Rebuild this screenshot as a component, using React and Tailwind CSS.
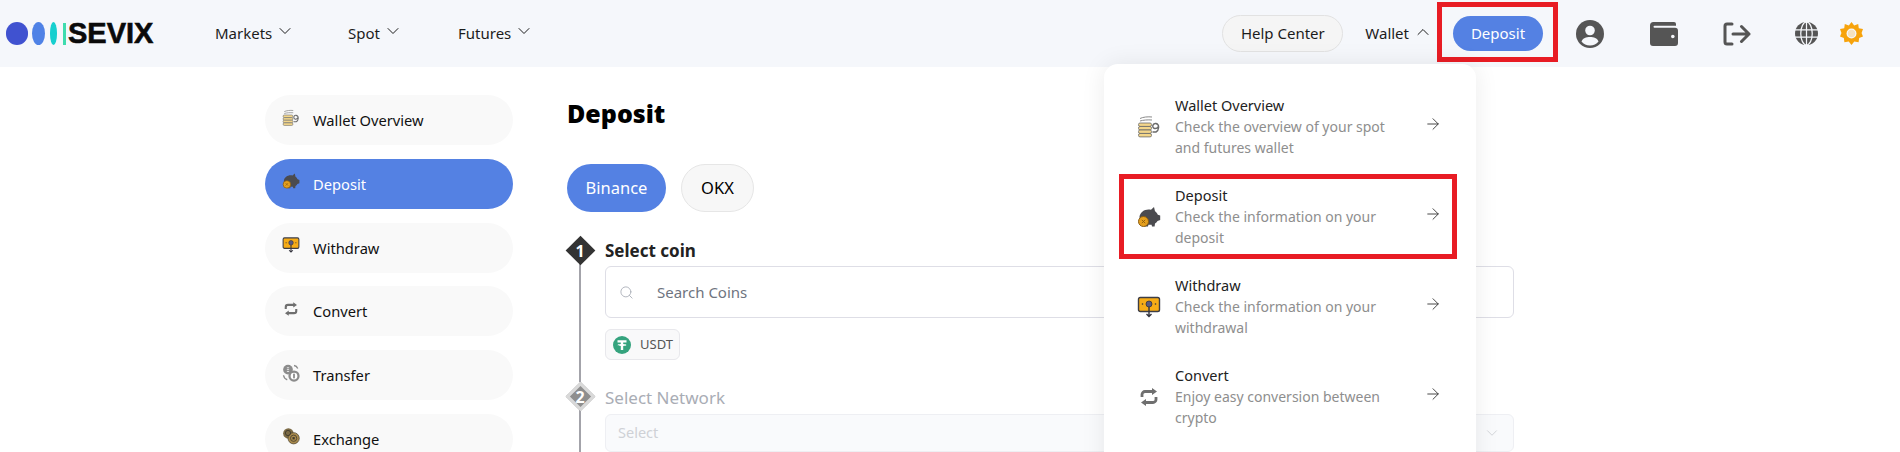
import React from 'react';
import { ChevronDown, ChevronUp, Search, ArrowRight } from 'lucide-react';

const sideItems = [
  { label: 'Wallet Overview', icon: CoinsIcon },
  { label: 'Deposit', icon: PiggyIcon, active: true },
  { label: 'Withdraw', icon: WithdrawIcon },
  { label: 'Convert', icon: ConvertIcon },
  { label: 'Transfer', icon: TransferIcon },
  { label: 'Exchange', icon: ExchangeIcon },
];

const menuItems = [
  { title: 'Wallet Overview', desc: 'Check the overview of your spot and futures wallet', icon: CoinsIcon },
  { title: 'Deposit', desc: 'Check the information on your deposit', icon: PiggyIcon, boxed: true },
  { title: 'Withdraw', desc: 'Check the information on your withdrawal', icon: WithdrawIcon },
  { title: 'Convert', desc: 'Enjoy easy conversion between crypto', icon: ConvertIcon },
];

function CoinsIcon({ className }) {
  return (
    <svg viewBox="0 0 24 24" className={className}>
      <path d="M3 3.500c3-1.500 8-2 12-1.500M3 6c3-1 8-1.300 12-1" fill="none" stroke="#8a8a8a" strokeWidth="1" />
      {[8, 11.500, 15, 18.500].map((y) => (
        <rect key={y} x="1.500" y={y} width="13" height="3.400" rx="1.500" fill="#f3d68a" stroke="#6b6b6b" strokeWidth="0.800" />
      ))}
      <path d="M15.500 17h3.500c3-1.500 4-7.500 0-8.500-3.500-.6-4.500 4.300-1.300 5 1.500.2 2.800-.5 3.500-1.700" fill="none" stroke="#6b6b6b" strokeWidth="1.400" />
    </svg>
  );
}

function PiggyIcon({ className }) {
  return (
    <svg viewBox="0 0 24 24" className={className}>
      <path d="M2.500 11.500C3.500 6.500 8.500 3.500 14 4.800L17 2l1 4.300c1.500 1 2.300 2.200 2.800 3.500l2.400.7v4.500l-2.700 1c-.6 1.200-1.500 2-2.500 2.500l-.4 3H15l-.4-1.800h-3.200l-.4 1.800H7.500L7 18.500C4 17 2 14.500 2.500 11.500z" fill="#4b4b4f" />
      <circle cx="6.500" cy="16.500" r="5" fill="#e6a01e" stroke="#8a5c10" strokeWidth="1" />
      <path d="M4.800 14.800l3.400 3.400M8.200 14.800l-3.400 3.400" stroke="#8a5c10" strokeWidth="0.900" />
    </svg>
  );
}

function WithdrawIcon({ className }) {
  return (
    <svg viewBox="0 0 24 24" className={className}>
      <rect x="1.500" y="2.500" width="21" height="14" rx="1.800" fill="#f7ac16" stroke="#3d3d45" strokeWidth="1.400" />
      <circle cx="12" cy="9" r="3" fill="#5a5a80" stroke="#33333d" strokeWidth="0.800" />
      <circle cx="5.500" cy="9" r="0.800" fill="#33333d" />
      <circle cx="18.500" cy="9" r="0.800" fill="#33333d" />
      <path d="M12 12v9M9.500 19l2.500 2.500 2.500-2.500" fill="none" stroke="#33333d" strokeWidth="1.400" />
    </svg>
  );
}

function ConvertIcon({ className }) {
  return (
    <svg viewBox="0 0 24 24" className={className}>
      <path d="M5 12V9.500a3 3 0 0 1 3-3h8M19 12v2.500a3 3 0 0 1-3 3H8" fill="none" stroke="#6f6f6f" strokeWidth="2.800" />
      <path d="M15 3l5 3.500-5 3.500zM9 14l-5 3.500L9 21z" fill="#6f6f6f" />
    </svg>
  );
}

function TransferIcon({ className }) {
  return (
    <svg viewBox="0 0 24 24" className={className}>
      <circle cx="8" cy="7.500" r="6.500" fill="#8c8c8c" />
      <circle cx="16" cy="16" r="7.500" fill="#8c8c8c" />
      <circle cx="16" cy="16" r="4.500" fill="#fff" />
      <rect x="14.800" y="12.800" width="2.400" height="6.400" rx="1" fill="#8c8c8c" />
      <path d="M6.500 5h3M6.500 7.500h3M6.500 10h3" stroke="#fff" strokeWidth="1" />
      <path d="M16 2c2.500.3 4 1.500 5 4M2 15c.5 3 2 5 5 6" fill="none" stroke="#8c8c8c" strokeWidth="1.800" />
    </svg>
  );
}

function ExchangeIcon({ className }) {
  return (
    <svg viewBox="0 0 24 24" className={className}>
      <circle cx="8.500" cy="8.500" r="7" fill="#7b6a45" />
      <circle cx="15.500" cy="15" r="7.500" fill="#a98a4d" stroke="#4d4430" strokeWidth="1" />
      <circle cx="15.500" cy="15" r="4.200" fill="none" stroke="#4d4430" strokeWidth="1.200" />
      <circle cx="8" cy="8" r="3.500" fill="none" stroke="#3f3a2c" strokeWidth="1.200" />
      <rect x="14" y="13.500" width="3" height="3" fill="#3f3a2c" />
    </svg>
  );
}

function UsdtIcon() {
  return (
    <svg viewBox="0 0 18 18" className="w-[18px] h-[18px] shrink-0">
      <circle cx="9" cy="9" r="9" fill="#35a37e" />
      <path d="M4.500 4.200h9v2.200h-3.300v1.500c1.800.1 3.300.5 3.300 1s-1.500.9-3.300 1V14H7.800v-4.100c-1.800-.1-3.300-.5-3.300-1s1.500-.9 3.300-1V6.400H4.500z" fill="#fff" />
    </svg>
  );
}

function UserCircleIcon() {
  return (
    <svg viewBox="0 0 28 28" className="w-[28px] h-[28px]">
      <circle cx="14" cy="14" r="14" fill="#555" />
      <circle cx="14" cy="10.500" r="4.800" fill="#f5f7fb" />
      <path d="M5.500 21.500c1.500-3.500 4.500-4.500 8.500-4.500s7 1 8.500 4.500C20.500 24 17.500 25.500 14 25.500S7.500 24 5.500 21.500z" fill="#f5f7fb" />
    </svg>
  );
}

function WalletIcon() {
  return (
    <svg viewBox="0 0 28 24" className="w-[28px] h-[24px]">
      <path d="M3.500 0H24a2 2 0 0 1 2 2v1.800H4.500a1 1 0 0 0 0 2H25a3 3 0 0 1 3 3V21a3 3 0 0 1-3 3H3a3 3 0 0 1-3-3V3.500A3.500 3.500 0 0 1 3.500 0z" fill="#555" />
      <circle cx="22.800" cy="14.500" r="1.800" fill="#f5f7fb" />
    </svg>
  );
}

function LogoutIcon() {
  return (
    <svg viewBox="0 0 28 24" className="w-[28px] h-[24px]" fill="none" stroke="#555" strokeWidth="3" strokeLinecap="round" strokeLinejoin="round">
      <path d="M9 2H4a2 2 0 0 0-2 2v16a2 2 0 0 0 2 2h5" />
      <path d="M10 12h16M18.500 4.500L26 12l-7.500 7.500" />
    </svg>
  );
}

function GlobeIcon() {
  return (
    <svg viewBox="0 0 24 24" className="w-[23px] h-[23px]">
      <circle cx="12" cy="12" r="12" fill="#555" />
      <path d="M0 8.200h24M0 15.800h24M12 0v24" stroke="#f5f7fb" strokeWidth="1.300" />
      <ellipse cx="12" cy="12" rx="6" ry="12" fill="none" stroke="#f5f7fb" strokeWidth="1.300" />
    </svg>
  );
}

function SunIcon() {
  return (
    <svg viewBox="0 0 24 24" className="w-[23px] h-[23px]">
      <path
        d="M12 0l2.800 3.600L19 2.200l.6 4.400 4.400.7-1.500 4.200L24 15l-4 1.600-.6 4.400-4.500-.6L12 24l-2.900-3.600-4.500.6-.6-4.400L0 15l1.500-3.500L0 7.300l4.400-.7.6-4.400 4.200 1.400z"
        fill="#f7a30c"
      />
      <circle cx="12" cy="12" r="5.200" fill="#f5f7fb" />
      <circle cx="12" cy="12" r="3.800" fill="#f7a30c" fillOpacity="0.25" />
    </svg>
  );
}

function Logo() {
  return (
    <div className="flex items-center w-[215px] pl-[6px]">
      <span className="block w-[22px] h-[23px] rounded-full bg-[#4052d0]" />
      <span className="block w-[13px] h-[23px] rounded-[50%] bg-[#4f82e6] ml-[4px]" />
      <span className="block w-[7px] h-[23px] rounded-[50%] bg-[#17cfcf] ml-[5px]" />
      <span className="block w-[3px] h-[22px] bg-[#3fdcae] ml-[6px]" />
      <span className="ml-[2px] text-[29px] leading-none font-bold text-[#0a0a0a] [-webkit-text-stroke:0.6px_#0a0a0a] font-['Liberation_Sans',sans-serif]">SEVIX</span>
    </div>
  );
}

function NavLink({ label, className }) {
  return (
    <div className={`flex items-center text-[15px] text-[#1c1c1c] ${className}`}>
      {label}
      <ChevronDown className="w-[20px] h-[20px] ml-[3px] -mt-[5px]" strokeWidth={1.2} />
    </div>
  );
}

function Header() {
  return (
    <header className="relative flex items-center h-[67px] bg-[#f5f7fb]">
      <Logo />
      <NavLink label="Markets" className="w-[133px]" />
      <NavLink label="Spot" className="w-[110px]" />
      <NavLink label="Futures" />
      <div className="flex items-center ml-auto">
        <button className="w-[121px] h-[37px] rounded-full border border-[#e2e2e2] bg-[#f5f5f5] text-[15px] text-[#1c1c1c]">Help Center</button>
        <div className="flex items-center ml-[22px] text-[15px] text-[#1c1c1c]">
          Wallet
          <ChevronUp className="w-[20px] h-[20px] ml-[4px] -mt-[4px]" strokeWidth={1.2} />
        </div>
        <button className="ml-[20px] w-[90px] h-[35px] rounded-full bg-[#5481e3] text-[15px] text-white">Deposit</button>
        <div className="ml-[33px] flex items-center">
          <UserCircleIcon />
          <div className="ml-[46px]"><WalletIcon /></div>
          <div className="ml-[45px]"><LogoutIcon /></div>
          <div className="ml-[44px]"><GlobeIcon /></div>
          <div className="ml-[22px] mr-[37px]"><SunIcon /></div>
        </div>
      </div>
      <div className="absolute left-[1437px] top-[2px] w-[121px] h-[60px] border-[5px] border-[#e81c24]" />
    </header>
  );
}

function Sidebar() {
  return (
    <aside className="w-[248px] shrink-0 flex flex-col gap-[13.8px]">
      {sideItems.map((item) => {
        const Icon = item.icon;
        return (
          <div
            key={item.label}
            className={`flex items-center shrink-0 h-[50px] rounded-full pl-[17px] text-[14.7px] ${item.active ? 'bg-[#5481e3] text-white' : 'bg-[#f9f9f9] text-[#111]'}`}
          >
            <Icon className="w-[18px] h-[18px] -mt-[5px]" />
            <span className="ml-[13px]">{item.label}</span>
          </div>
        );
      })}
    </aside>
  );
}

function StepMarker({ n, disabled }) {
  return (
    <div className="flex flex-col items-center w-[28px] mr-[11px] self-stretch">
      <div className={`flex items-center justify-center shrink-0 w-[21px] h-[21px] mt-[4px] rotate-45 ${disabled ? 'bg-[#8e8e8e] border-[3px] border-[#d9d9d9]' : 'bg-[#333]'}`}>
        <span className="-rotate-45 text-[16px] font-bold text-white leading-none">{n}</span>
      </div>
      <div className="w-[2px] flex-1 bg-[#a3a3aa]" />
    </div>
  );
}

function Content() {
  return (
    <main className="flex-1 pl-[54px] w-0">
      <h1 className="text-[25px] leading-[30px] font-black text-black mt-[3px]">Deposit</h1>
      <div className="flex gap-[15px] mt-[36px]">
        <button className="w-[99px] h-[48px] rounded-full bg-[#5481e3] text-white text-[16.500px]">Binance</button>
        <button className="w-[73px] h-[48px] rounded-full bg-[#f7f7f7] border border-[#e6e6e6] text-black text-[16.500px]">OKX</button>
      </div>

      <div className="flex w-[948px] mt-[24px] -ml-[1px]">
        <StepMarker n={1} />
        <div className="flex-1 h-[146px]">
          <div className="text-[17px] leading-[31px] font-bold text-[#222] -mt-[1px]">Select coin</div>
          <div className="flex items-center h-[52px] border border-[#dedee6] rounded-[6px] pl-[13px] text-[15px] text-[#6e7480]">
            <Search className="w-[15px] h-[15px] text-[#a8adb6]" strokeWidth={1.4} />
            <span className="ml-[23px]">Search Coins</span>
          </div>
          <div className="flex items-center w-[75px] h-[31px] mt-[11px] rounded-[6px] border border-[#e8e8ec] bg-[#f9f9fa] pl-[7px] text-[13px] text-[#555]">
            <UsdtIcon />
            <span className="ml-[9px]">USDT</span>
          </div>
        </div>
      </div>

      <div className="flex w-[948px] -ml-[1px]">
        <StepMarker n={2} disabled />
        <div className="flex-1 h-[90px]">
          <div className="text-[17px] leading-[31px] text-[#a9adb5]">Select Network</div>
          <div className="flex items-center justify-between h-[38px] mt-[1px] border border-[#eeeff3] bg-[#f9fafc] rounded-[6px] pl-[12px] pr-[12px] text-[14.500px] text-[#cfd1d6]">
            Select
            <ChevronDown className="w-[18px] h-[18px] text-[#cfd1d6]" strokeWidth={1.2} />
          </div>
        </div>
      </div>
    </main>
  );
}

function WalletMenu() {
  return (
    <div className="absolute left-[1104px] top-[64px] w-[372px] h-[420px] bg-white rounded-[14px] shadow-[0_0_24px_rgba(0,0,0,0.08)] pt-[31px] pl-[15px] pr-[19px]">
      {menuItems.map((item) => {
        const Icon = item.icon;
        return (
          <div key={item.title} className="relative flex items-center h-[63px] mb-[27px] pl-[15px] pr-[15px]">
            <Icon className="w-[24px] h-[24px] shrink-0 ml-[3px]" />
            <div className="ml-[14px] w-[230px] text-[14px] leading-[21px]">
              <div className="text-[#222] text-[14.500px]">{item.title}</div>
              <div className="text-[#8e8e8e]">{item.desc}</div>
            </div>
            <ArrowRight className="w-[18px] h-[18px] ml-auto -mt-[5px] text-[#333]" strokeWidth={1.2} />
            {item.boxed && <div className="absolute left-0 -top-[11px] w-[338px] h-[85px] border-[5px] border-[#e81c24]" />}
          </div>
        );
      })}
    </div>
  );
}

export default function App() {
  return (
    <div className="relative h-[452px] overflow-hidden bg-white font-['Noto_Sans',sans-serif]">
      <Header />
      <div className="flex pt-[28px] pl-[265px]">
        <Sidebar />
        <Content />
      </div>
      <WalletMenu />
    </div>
  );
}
